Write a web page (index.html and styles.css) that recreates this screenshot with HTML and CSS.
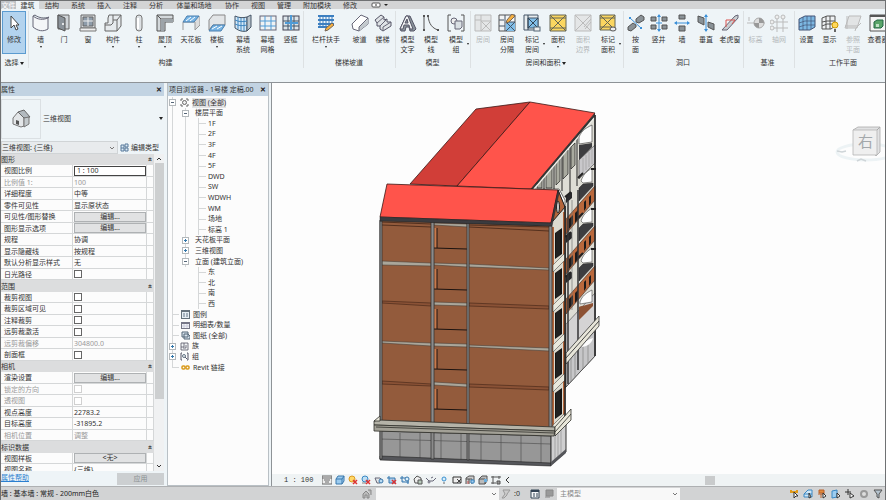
FILE: index.html
```html
<!DOCTYPE html>
<html lang="zh-CN">
<head>
    <meta charset="UTF-8">
    <meta name="viewport" content="width=device-width, initial-scale=1.0">
    <title>Revit - 1号楼 定稿</title>
    <link rel="stylesheet" href="styles.css">
</head>
<body>
    <nav class="tabs">
        <button class="tab file">文件</button>
        <button class="tab active">建筑</button>
        <button class="tab">结构</button>
        <button class="tab">系统</button>
        <button class="tab">插入</button>
        <button class="tab">注释</button>
        <button class="tab">分析</button>
        <button class="tab long">体量和场地</button>
        <button class="tab">协作</button>
        <button class="tab">视图</button>
        <button class="tab">管理</button>
        <button class="tab addins">附加模块</button>
        <button class="tab">修改</button>
        <button class="tab more" aria-label="面板显示">
            <svg width="18" height="6" viewBox="0 0 18 6"><rect x="1" y="1" width="8" height="4" rx="1" fill="#fff" stroke="#555"/><path d="M4 3h2" stroke="#333"/><path d="M13 2h4l-2 2z" fill="#222"/></svg>
        </button>
    </nav>

    <header class="ribbon">
        <section class="group select-group">
            <div class="tools">
                <button class="tool medium selected"><svg viewBox="0 0 18 18"><path d="M6 2v12l3-3 2 5 2-1-2-4h3z" fill="#fff" stroke="#444"/></svg>修改</button>
            </div>
            <div class="group-name">选择 <i class="caret"></i></div>
        </section>

        <section class="group">
            <div class="tools">
                <button class="tool drop"><svg viewBox="0 0 18 18"><path d="M1 2c5 4 10 4 15 2v11c-5 3-10 2-15-2z" fill="#f4f6f8" stroke="#667"/><path d="M1 2l2-1c4 3 9 4 14 2l-1 1" fill="#bcc" stroke="#667"/></svg>墙</button>
                <button class="tool medium"><svg viewBox="0 0 18 18"><path d="M3 1h11v14H3z" fill="#cfd4d8" stroke="#666"/><path d="M3 1l7 3v13l-7-3z" fill="#8b939a" stroke="#555"/><circle cx="8" cy="10" r="1" fill="#fff"/></svg>门</button>
                <button class="tool medium"><svg viewBox="0 0 18 18"><path d="M2 1h14v13H2z" fill="#d7dbde" stroke="#666"/><path d="M4 3h10v9H4z" fill="#8e9caa" stroke="#666"/><path d="M9 3v9M4 7h10" stroke="#eee"/><path d="M1 14h16v3H1z" fill="#eee" stroke="#777"/></svg>窗</button>
                <button class="tool wide drop"><svg viewBox="0 0 18 18"><path d="M5 1h12v11l-4 5H1V9h3V4z" fill="#e6eaed" stroke="#666"/><path d="M9 1v8l-2 2H1M13 17V6l4-5M9 6h4" fill="none" stroke="#666"/></svg>构件</button>
                <button class="tool wide drop"><svg viewBox="0 0 18 18"><rect x="6" y="1" width="6" height="16" rx="3" fill="#dde1e4" stroke="#777"/><path d="M8 4v11" stroke="#fff" stroke-width="2"/></svg>柱</button>
                <button class="tool wide drop"><svg viewBox="0 0 18 18"><path d="M1 1h16v7H9v9H1z" fill="#d3d8db" stroke="#555"/><path d="M1 1l4 4v12M5 5h12" fill="none" stroke="#555"/><path d="M5 5l3 3v9H5zM5 5h12v3H8z" fill="#9da4a9"/></svg>屋顶</button>
                <button class="tool wide"><svg viewBox="0 0 18 18"><path d="M18 2v9l-5 5V8H1" fill="#ddd" stroke="#999"/><path d="M1 8v8" stroke="#999"/><path d="M5 2h12l-5 6H1z" fill="#77b4e4" stroke="#4a7fae"/><path d="M4 7l5-4M8 7l5-4" stroke="#fff"/></svg>天花板</button>
                <button class="tool wide drop"><svg viewBox="0 0 18 18"><path d="M5 1h12v10H5l-4 5V6z" fill="#e2e5e7" stroke="#888"/><path d="M5 11h12l-4 6H1z" fill="#77b4e4" stroke="#4a7fae"/><path d="M4 15l5-3M9 15l5-3" stroke="#fff"/></svg>楼板</button>
                <button class="tool wide"><svg viewBox="0 0 18 18"><path d="M1 2c4 2 8 2 12 1v14c-4 1-8 0-12-3z" fill="#d6e9f7" stroke="#456"/><path d="M13 3l4-2v12l-4 4z" fill="#b9c4cc" stroke="#456"/><path d="M4 3v12M7 4v13M10 4v13M1 6c4 2 8 2 12 1M1 10c4 2 8 2 12 1" fill="none" stroke="#3f86c0"/></svg>幕墙<br>系统</button>
                <button class="tool"><svg viewBox="0 0 18 18"><rect x="1" y="2" width="16" height="14" fill="#eef2f4" stroke="#667"/><path d="M6 2v14M12 2v14M1 7h16M1 12h16" stroke="#4f9bd6"/></svg>幕墙<br>网格</button>
                <button class="tool"><svg viewBox="0 0 18 18"><rect x="1" y="2" width="16" height="14" fill="#dce4e9" stroke="#445"/><path d="M6 2v14M12 2v14M1 7h16M1 12h16" stroke="#456"/><path d="M9 1v15M3 9h13" stroke="#4f9bd6" stroke-width="2"/></svg>竖梃</button>
            </div>
            <div class="group-name">构建</div>
        </section>

        <section class="group">
            <div class="tools">
                <button class="tool xwide drop"><svg viewBox="0 0 18 18"><path d="M1 2h16M1 6h16M1 10h16M1 13h12" stroke="#3c7fc0" stroke-width="2"/><path d="M3 2v12M6 2v12M9 2v12M12 2v10M15 2v8" stroke="#3c7fc0"/><path d="M8 17l1-3 6-5 2 2-6 5z" fill="#f5b041" stroke="#765"/></svg>栏杆扶手</button>
                <button class="tool"><svg viewBox="0 0 18 18"><path d="M1 10L10 1l7 3v6l-9 7-6-2z" fill="#fff" stroke="#667"/><path d="M8 13l9-8v5l-9 7z" fill="#c3c9cd"/><path d="M8 17v-4l9-9" fill="none" stroke="#667"/></svg>坡道</button>
                <button class="tool"><svg viewBox="0 0 18 18"><path d="M1 6l6-5 3 2v3l3-1v3h4v4l-8 5-3-2v-3H3V9z" fill="#dfe3e6" stroke="#556"/><path d="M3 9l7-6M6 12l7-7M9 16v-3l8-5" stroke="#667" fill="none"/></svg>楼梯</button>
            </div>
            <div class="group-name">楼梯坡道</div>
        </section>

        <section class="group">
            <div class="tools">
                <button class="tool"><svg viewBox="0 0 18 18"><path d="M7 2h4l6 13-2 2h-4l-1-4H7l-1 4H2l-1-2z" fill="#8a949b" stroke="#556"/><path d="M1 15L7 2h2l5 13h-3l-1-4H5l-1 4zM6 9h3L8 5z" fill="#f2f4f5" stroke="#556"/></svg>模型<br>文字</button>
                <button class="tool medium"><svg viewBox="0 0 18 18"><path d="M2 2v14M6 2c1 8 4 12 10 14" fill="none" stroke="#555"/><path d="M1 1h2v2H1zM1 15h2v2H1zM5 1h2v2H5zM15 15h2v2h-2z" fill="#555"/></svg>模型<br>线</button>
                <button class="tool wide side"><svg viewBox="0 0 18 18"><path d="M4 1H1v16h3M14 1h3v16h-3" fill="none" stroke="#555"/><circle cx="7" cy="7" r="3" fill="#eee" stroke="#667"/><path d="M8 7h7v6l-2 2H8z" fill="#d9dfe3" stroke="#667"/></svg>模型<br>组</button>
            </div>
            <div class="group-name">模型</div>
        </section>

        <section class="group rooms">
            <div class="tools">
                <button class="tool medium" disabled><svg viewBox="0 0 18 18"><path d="M1 1h16v16H1zM7 1v16M1 6h6M7 7h10M7 7l10 10M17 7L7 17" fill="#e4e6e7" stroke="#bbb"/></svg>房间</button>
                <button class="tool medium"><svg viewBox="0 0 18 18"><path d="M1 1h16v16H1z" fill="#f2f4f5" stroke="#555"/><path d="M8 8h9v9H8z" fill="#82bfe9"/><path d="M7 1v16M1 6h5M1 12h6M8 8h9M8 8l9 9M17 8l-9 9" stroke="#456" fill="none"/><path d="M8 9l1-3 5-6 3 2-6 6z" fill="#f5b041" stroke="#765"/></svg>房间<br>分隔</button>
                <button class="tool wide side"><svg viewBox="0 0 18 18"><path d="M1 1h14v15H1z" fill="#e8ecee" stroke="#456"/><path d="M5 4h10v10H5z" fill="#82bfe9" stroke="#456"/><path d="M5 4l10 10M15 4L5 14M5 1v15" stroke="#345"/><rect x="11" y="13" width="6" height="4" fill="#eee" stroke="#567"/></svg>标记<br>房间</button>
                <button class="tool wide drop"><svg viewBox="0 0 18 18"><path d="M1 1h16v16H1z" fill="#fbd660" stroke="#665"/><path d="M1 1l16 16M17 1L1 17M1 4h16M1 14h16" stroke="#665"/></svg>面积</button>
                <button class="tool medium" disabled><svg viewBox="0 0 18 18"><path d="M1 1h16v16H1z" fill="#e4e6e7" stroke="#bbb"/><path d="M1 1l16 16M17 1L1 17M17 5l-7 8M17 8l-6 7" stroke="#bbb" fill="none"/></svg>面积<br>边界</button>
                <button class="tool wide side"><svg viewBox="0 0 18 18"><path d="M1 1h15v15H1z" fill="#fbd660" stroke="#665"/><path d="M1 1l15 15M16 1L1 16M1 4h15M1 13h12" stroke="#665"/><ellipse cx="14" cy="15" rx="3" ry="2" fill="#eee" stroke="#555"/></svg>标记<br>面积</button>
            </div>
            <div class="group-name">房间和面积 <i class="caret"></i></div>
        </section>

        <section class="group">
            <div class="tools">
                <button class="tool"><svg viewBox="0 0 18 18"><path d="M9 5l5-4 3 2v3l-5 3-3-1zM1 13l5-4 3 2v2l-5 4-3-1z" fill="#8a9297" stroke="#555"/><path d="M3 4l11 10" stroke="#3b90d8"/><path d="M2 3h2v2H2zM13 13h2v2h-2z" fill="#3b90d8"/></svg>按<br>面</button>
                <button class="tool"><svg viewBox="0 0 18 18"><path d="M1 3h5v4H1zM12 3h5v4h-5zM1 11h5v4H1zM12 11h5v4h-5z" fill="#8a9297" stroke="#555"/><path d="M9 1v16M6 9h6" stroke="#3b90d8"/><path d="M9 0l2 3H7zM9 18l2-3H7z" fill="#3b90d8"/></svg>竖井</button>
                <button class="tool medium"><svg viewBox="0 0 18 18"><path d="M6 1h6v4H6zM6 12h6v5H6z" fill="#8a9297" stroke="#555"/><path d="M2 9h14" stroke="#3b90d8"/><path d="M1 9l3-2v4zM17 9l-3-2v4z" fill="#3b90d8"/></svg>墙</button>
                <button class="tool medium"><svg viewBox="0 0 18 18"><path d="M1 2l6 2v7L1 8zM11 8l6 2v6l-6-3z" fill="#8a9297" stroke="#555"/><path d="M9 1v16" stroke="#3b90d8"/><path d="M9 0l2 3H7zM9 18l2-3H7z" fill="#3b90d8"/></svg>垂直</button>
                <button class="tool medium"><svg viewBox="0 0 18 18"><path d="M1 16L14 2l3-1v3L6 16z" fill="#c9ced1" stroke="#667"/><path d="M5 13V6h9l-3 4" fill="none" stroke="#d9534f"/></svg>老虎窗</button>
            </div>
            <div class="group-name">洞口</div>
        </section>

        <section class="group datum">
            <div class="tools">
                <button class="tool" disabled><svg viewBox="0 0 18 18"><path d="M0 9h18" stroke="#bbb"/><circle cx="12" cy="9" r="5" fill="#ddd" stroke="#aaa"/><path d="M12 4a5 5 0 0 1 5 5h-5zM12 14a5 5 0 0 1-5-5h5z" fill="#999"/><path d="M2 3v4" stroke="#bbb"/></svg>标高</button>
                <button class="tool medium" disabled><svg viewBox="0 0 18 18"><path d="M7 5v13M13 5v13M4 8h14M4 14h14" stroke="#bbb"/><g fill="#eee" stroke="#bbb"><circle cx="7" cy="3" r="2"/><circle cx="13" cy="3" r="2"/><circle cx="2" cy="8" r="2"/><circle cx="2" cy="14" r="2"/></g></svg>轴网</button>
            </div>
            <div class="group-name">基准</div>
        </section>

        <section class="group">
            <div class="tools">
                <button class="tool"><svg viewBox="0 0 18 18"><path d="M1 5l6-3h10v11l-5 3H1z" fill="#7cb7e2" stroke="#457"/><path d="M1 9l6-2h10M1 13l6-2h10M5 3v13M9 2v14M13 2v13" fill="none" stroke="#457" stroke-width=".7"/></svg>设置</button>
                <button class="tool"><svg viewBox="0 0 18 18"><path d="M1 4l5-2h8v10l-4 3H1z" fill="#eef1f3" stroke="#555"/><path d="M1 8l5-1h8M1 12l5-2h8M5 2v13M9 2v13" fill="none" stroke="#555"/><circle cx="14" cy="11" r="3" fill="#ffd85c" stroke="#c90"/><path d="M13 15h2v3h-2z" fill="#666"/></svg>显示</button>
                <button class="tool medium" disabled><svg viewBox="0 0 18 18"><path d="M5 2h12l-4 12H1z" fill="#e2e4e5" stroke="#bbb"/><path d="M3 2v13M1 12h13M11 17l1-3 5-5" stroke="#bbb" fill="none"/></svg>参照<br>平面</button>
                <button class="tool wide"><svg viewBox="0 0 18 18"><path d="M1 1h16v16H1z" fill="#f5f5f5" stroke="#555"/><path d="M1 2h16" stroke="#555" stroke-width="2"/><path d="M5 8l3-2h6v6l-2 2H5z" fill="#5aa469" stroke="#264"/><path d="M7 10h3v3H7z" fill="#bfe0c5"/></svg>查看器</button>
            </div>
            <div class="group-name">工作平面</div>
        </section>
    </header>

    <main class="workspace">
        <aside class="properties">
            <div class="panel-title">属性<button class="close" aria-label="关闭属性">✕</button></div>
            <div class="type-selector">
                <div class="type-thumb">
                    <svg width="20" height="20" viewBox="0 0 20 20"><path d="M2 9l5-6 6 5v9l-3 1-8-3z" fill="#e3e6e8" stroke="#777"/><path d="M7 3l6-2 6 7-6 1z" fill="#b3babf" stroke="#666"/><path d="M13 9l5-1v7l-5 3z" fill="#c3c9cc" stroke="#777"/><path d="M5 11l3 1v4l-3-1z" fill="#555"/></svg>
                </div>
                <span>三维视图</span>
                <i class="caret"></i>
            </div>
            <div class="instance-row">
                <select aria-label="实例"><option>三维视图: {三维}</option></select>
                <button class="edit-type"><svg width="9" height="9" viewBox="0 0 9 9"><path d="M1 2h3v6H1zM5 1h3v3H5zM5 5h3v3H5zM1 5h3" fill="#dceaf5" stroke="#57799a"/></svg>编辑类型</button>
            </div>
            <div class="prop-body">
                <div class="prop-clip">
                    <table class="props">
                        <colgroup>
                            <col class="col-name">
                            <col class="col-value">
                            <col>
                        </colgroup>
                        <tbody>
                            <tr><th colspan="3">图形<b>«</b></th></tr>
                            <tr><td><label for="scale">视图比例</label></td><td><input type="text" id="scale" value="1 : 100"></td><td></td></tr>
                            <tr class="off"><td>比例值 1:</td><td>100</td><td></td></tr>
                            <tr><td>详细程度</td><td>中等</td><td></td></tr>
                            <tr><td>零件可见性</td><td>显示原状态</td><td></td></tr>
                            <tr><td>可见性/图形替换</td><td><button>编辑...</button></td><td></td></tr>
                            <tr><td>图形显示选项</td><td><button>编辑...</button></td><td></td></tr>
                            <tr><td>规程</td><td>协调</td><td></td></tr>
                            <tr><td>显示隐藏线</td><td>按规程</td><td></td></tr>
                            <tr><td>默认分析显示样式</td><td>无</td><td></td></tr>
                            <tr><td><label for="sun">日光路径</label></td><td><input type="checkbox" id="sun"></td><td></td></tr>
                            <tr><th colspan="3">范围<b>«</b></th></tr>
                            <tr><td><label for="crop">裁剪视图</label></td><td><input type="checkbox" id="crop"></td><td></td></tr>
                            <tr><td><label for="cropVisible">裁剪区域可见</label></td><td><input type="checkbox" id="cropVisible"></td><td></td></tr>
                            <tr><td><label for="annoCrop">注释裁剪</label></td><td><input type="checkbox" id="annoCrop"></td><td></td></tr>
                            <tr><td><label for="farClip">远剪裁激活</label></td><td><input type="checkbox" id="farClip"></td><td></td></tr>
                            <tr class="off"><td>远剪裁偏移</td><td>304800.0</td><td></td></tr>
                            <tr><td><label for="sectionBox">剖面框</label></td><td><input type="checkbox" id="sectionBox"></td><td></td></tr>
                            <tr><th colspan="3">相机<b>«</b></th></tr>
                            <tr><td>渲染设置</td><td><button>编辑...</button></td><td></td></tr>
                            <tr class="off"><td><label for="locked">锁定的方向</label></td><td><input type="checkbox" id="locked" disabled></td><td></td></tr>
                            <tr class="off"><td><label for="persp">透视图</label></td><td><input type="checkbox" id="persp" disabled></td><td></td></tr>
                            <tr><td>视点高度</td><td>22783.2</td><td></td></tr>
                            <tr><td>目标高度</td><td>-31895.2</td><td></td></tr>
                            <tr class="off"><td>相机位置</td><td>调整</td><td></td></tr>
                            <tr><th colspan="3">标识数据<b>«</b></th></tr>
                            <tr><td>视图样板</td><td><button>&lt;无&gt;</button></td><td></td></tr>
                            <tr><td>视图名称</td><td>{三维}</td><td></td></tr>
                        </tbody>
                    </table>
                </div>
                <div class="scrollbar">
                    <svg width="8" height="8" viewBox="0 0 8 8"><path d="M2 5l2-2 2 2" fill="none" stroke="#333"/></svg>
                    <div class="thumb"></div>
                    <svg width="8" height="8" viewBox="0 0 8 8"><path d="M2 3l2 2 2-2" fill="none" stroke="#333"/></svg>
                </div>
            </div>
            <div class="prop-footer">
                <a href="#help">属性帮助</a>
                <button disabled>应用</button>
            </div>
        </aside>

        <aside class="browser">
            <div class="panel-title">项目浏览器 - 1号楼 定稿.00<button class="close" aria-label="关闭项目浏览器">✕</button></div>
            <ul class="tree">
                <li class="top"><i class="box"></i><svg class="ti" viewBox="0 0 9 9"><path d="M1 3V1h2M6 1h2v2M8 6v2H6M3 8H1V6" fill="none" stroke="#666"/><circle cx="4.500" cy="4.500" r="2" fill="#eee" stroke="#666"/></svg><span class="picked">视图 (全部)</span></li>
                <li class="mid"><i class="box"></i>楼层平面</li>
                <li class="leaf">1F</li>
                <li class="leaf">2F</li>
                <li class="leaf">3F</li>
                <li class="leaf">4F</li>
                <li class="leaf">5F</li>
                <li class="leaf">DWD</li>
                <li class="leaf">SW</li>
                <li class="leaf">WDWH</li>
                <li class="leaf">WM</li>
                <li class="leaf">场地</li>
                <li class="leaf">标高 1</li>
                <li class="mid"><i class="box plus"></i>天花板平面</li>
                <li class="mid"><i class="box plus"></i>三维视图</li>
                <li class="mid"><i class="box"></i>立面 (建筑立面)</li>
                <li class="leaf last">东</li>
                <li class="leaf last">北</li>
                <li class="leaf last">南</li>
                <li class="leaf last">西</li>
                <li class="top"><i class="dash"></i><svg class="ti" viewBox="0 0 9 9"><path d="M0 0h9v9H0z" fill="#66727c"/><path d="M1 2h7v6H1z" fill="#e6eef4"/><path d="M2 4h2M5 4h2M2 6h2M5 6h2" stroke="#678"/></svg>图例</li>
                <li class="top"><i class="dash"></i><svg class="ti" viewBox="0 0 9 9"><path d="M0 1h9v7H0z" fill="#778"/><path d="M1 3h7v4H1z" fill="#f4f6f8"/><path d="M1 5h7M3 3v4M6 3v4" stroke="#ccd"/></svg>明细表/数量</li>
                <li class="top"><i class="dash"></i><svg class="ti" viewBox="0 0 9 9"><path d="M1 1h6v5H1zM3 3h4l2 2v3H3z" fill="#d8e4ee" stroke="#567"/></svg>图纸 (全部)</li>
                <li class="top"><i class="box plus"></i><svg class="ti" viewBox="0 0 9 9"><path d="M1 1h7v7H1zM4 1v4H1M6 3v3H3" fill="#f2f4f5" stroke="#556" stroke-width=".8"/></svg>族</li>
                <li class="top"><i class="box plus"></i><svg class="ti" viewBox="0 0 9 9"><path d="M2 1H1v7h1M7 1h1v7H7M5 5l2 2" fill="none" stroke="#556"/><circle cx="4" cy="4" r="1.500" fill="#eee" stroke="#678"/></svg>组</li>
                <li class="top end"><i class="dash"></i><svg class="ti" viewBox="0 0 9 9"><g fill="none" stroke="#d99a1c" stroke-width="1.500"><rect x="1" y="3" width="3" height="3" rx="1"/><rect x="5" y="3" width="3" height="3" rx="1"/></g></svg>Revit 链接</li>
            </ul>
        </aside>

        <section class="view">
            <svg class="scene" viewBox="272 83 613 391" role="img" aria-label="三维视图">
                <defs>
                    <!-- one storey of the long side: parapet, slab, opening and posts -->
                    <g id="storey">
                        <path d="M566 219l29-33v14l-29 34z" fill="#b9683c" stroke="#3a2a22" stroke-width=".6"/>
                        <path d="M569 219l4-4v9l-4 5zM575 213l3-3v9l-3 4zM584 202l2-2v8l-2 3zM589 197l2-2v8l-2 3z" fill="#1d1a1a"/>
                        <path d="M579 188l4-4 10-1v3l-14 15z" fill="#3d3d40" stroke="#222" stroke-width=".5"/>
                        <path d="M581 181c2-6 5-9 11-13v14l-9 1z" fill="#fdfdfd" stroke="#444" stroke-width=".6"/>
                        <path d="M566 196l6-4v6l-6 5z" fill="#28282a"/>
                        <path d="M578 178l5-5M565 197l6-5M591 169h5" stroke="#222" stroke-width="2"/>
                    </g>
                    <!-- stair bay between the two front posts -->
                    <g id="stair">
                        <path d="M434 228h3v20h-3z" fill="#c97a4c"/>
                        <path d="M437 228v20M434 248l33 1" stroke="#1c1310" fill="none"/>
                    </g>
                    <g id="window">
                        <path d="M555 233l7-5v26l-7 5z" fill="#151515"/>
                        <path d="M553 265l12-12v7l-12 12z" fill="#e9e8dc" stroke="#333" stroke-width=".5"/>
                        <path d="M557 232v25M559 231v25" stroke="#555" stroke-width=".4"/>
                    </g>
                </defs>

                <!-- long side -->
                <path d="M531 189l64-74v241l-30 32V200l-6-11z" fill="#deddd5" stroke="#333" stroke-width=".7"/>
                <path d="M537 184l5-5v9h-5zM546 174l6-6v20h-6zM556 163l4-4v22l-4 4zM563 155l5-5v24l-5 5zM571 147l4-4v22l-4 4z" fill="#a9aa9f" stroke="#222" stroke-width=".7"/>
                <path d="M544 174v15M554 162v27M562 153v38M570 144v50M577 136v50" stroke="#222"/>
                <path d="M534 189l60-71" stroke="#f0f0e9" stroke-width="1.500"/>
                <path d="M579 137c3-7 7-9 13-12v17l-13 2z" fill="#fdfdfd" stroke="#333" stroke-width=".6"/>
                <path d="M579 145l13-2v4l-13 14z" fill="#3d3d40"/>
                <path d="M579 160l16-15v18l-16 16z" fill="#c9c8cb" stroke="#444" stroke-width=".6"/>
                <path d="M583 158v15M586 155v15M589 152v15M592 149v15" stroke="#999" stroke-width=".6"/>
                <use href="#storey"/>
                <use href="#storey" y="40"/>
                <use href="#storey" y="80"/>
                <path d="M579 307l14-4v5l-14 14z" fill="#8c5133"/>
                <path d="M566 324l29-31v33l-29 35z" fill="#d4d3d4" stroke="#444" stroke-width=".6"/>
                <path d="M580 302c2-6 6-9 12-12v12l-12 2z" fill="#fdfdfd" stroke="#444" stroke-width=".6"/>
                <path d="M579 307l14-4v3l-14 14z" fill="#8c5133"/>
                <path d="M566 362l29-32v26l-29 31z" fill="#c6c6c8" stroke="#333" stroke-width=".7"/>
                <path d="M571 357v25M575 353v24M583 345v24M588 340v23" stroke="#777" stroke-width=".6"/>
                <path d="M568 200v184M578 190v180" stroke="#333335" stroke-width="1.500"/>
                <path d="M572 200v110" stroke="#777" stroke-width=".7"/>
                <path d="M595 115v241" stroke="#232325" stroke-width="1.500"/>
                <path d="M581 347c3-5 7-8 12-9-1 5-6 9-12 9z" fill="#fdfdfd"/>
                <path d="M566 353l33-37v10l-33 38z" fill="#e7e5d9" stroke="#333" stroke-width=".8"/>
                <path d="M566 358l33-37" stroke="#444"/>

                <!-- gable end -->
                <path d="M558 190l7 18v220l-14 14V222z" fill="#dddbd0" stroke="#222" stroke-width=".8"/>
                <path d="M558 190l7 17-12 14-2 1z" fill="#b4653a" stroke="#222"/>
                <ellipse cx="558" cy="207" rx="1.500" ry="6" fill="#ccc" stroke="#222"/>
                <path d="M563 212h2v206l-2 2zM552 227h2v199h-2z" fill="#b4653a"/>
                <use href="#window"/>
                <use href="#window" y="40"/>
                <use href="#window" y="80"/>
                <use href="#window" y="120"/>
                <use href="#window" y="160"/>
                <path d="M565 206v214" stroke="#222" stroke-width="1.500"/>

                <!-- front wall -->
                <path d="M380 220l171 6v203l-171-8z" fill="#935b3c" stroke="#333"/>
                <path d="M382 225l49 2M469 227l80 4M382 222l49 2M469 225l80 2" stroke="#54301e"/>
                <g stroke="#54301e" stroke-width=".8" fill="#8a5236">
                    <path d="M382 301l49 2v3l-49-3zM469 303l80 3v3l-80-3zM382 381l49 3v2l-49-2zM469 384l80 3v3l-80-3z"/>
                </g>
                <g fill="#aaa69a" stroke="#4b4038" stroke-width=".6">
                    <path d="M382 261l49 2v3l-49-1zM434 263l33 1v3l-33-2zM469 264l80 4v2l-80-3z"/>
                    <path d="M382 341l49 2v3l-49-3zM434 343l33 1v3l-33-1zM469 345l80 3v3l-80-4z"/>
                    <path d="M434 223l33 1v3l-33-2zM434 302l33 1v3l-33-1zM434 382l33 2v3l-33-2z"/>
                </g>
                <use href="#stair"/>
                <use href="#stair" y="41"/>
                <use href="#stair" y="81"/>
                <use href="#stair" y="121"/>
                <use href="#stair" y="161"/>

                <!-- base -->
                <path d="M380 431l171 5v29l-171-6z" fill="#979797" stroke="#444"/>
                <path d="M380 439l171 5M400 433v26M420 433v27M441 433v27M461 434v27M481 434v28M501 434v29M521 435v28M541 436v28" stroke="#555" stroke-width=".7"/>
                <path d="M380 456l171 7v3l-171-6z" fill="#55565a" stroke="#222" stroke-width=".6"/>
                <path d="M551 436l15-16v32l-15 13z" fill="#cfcfd0" stroke="#333"/>
                <path d="M555 433v28M558 430v29M561 427v28" stroke="#888" stroke-width=".6"/>
                <path d="M551 462l15-13v4l-15 13z" fill="#55565a"/>
                <g fill="#8b8b8b" stroke="#2b2b2b" stroke-width=".7">
                    <path d="M380 221h2v238h-2zM431 222h3v237h-3zM467 223h2v237h-2zM549 226h3v205h-3z"/>
                </g>
                <g fill="#b5b3a8" stroke="#2e2e2a" stroke-width=".8">
                    <path d="M374 421l5-1 176 7v4l-181-6z"/>
                    <path d="M374 425l181 6-1 5-180-5z" fill="#a3a197"/>
                    <path d="M555 427l16-18v11l-16 16z" fill="#e9e7da"/>
                    <path d="M374 421l6-5v5z" fill="#e9e7da"/>
                    <path d="M376 427l178 6M555 432l16-18" fill="none"/>
                </g>

                <!-- roofs -->
                <path d="M476 109l54-7-73 84-47-2z" fill="#d13e38" stroke="#3b1815" stroke-width=".8"/>
                <path d="M530 102l65 11-64 76-74-3z" fill="#ff544b" stroke="#3b1815" stroke-width=".8"/>
                <path d="M595 113v3l-62 73h-2z" fill="#333"/>
                <path d="M387 184l171 6-7 33-171-6z" fill="#ff544b" stroke="#3b1815" stroke-width=".8"/>
                <path d="M380 217l171 6 7-33 1 3-7 33-172-5z" fill="#3b3b3f" stroke="#222" stroke-width=".5"/>

                <!-- view cube -->
                <ellipse cx="866" cy="152" rx="29" ry="8" fill="none" stroke="#edf3f5" stroke-width="3"/>
                <path d="M837 151l5 1 4-1M857 161l4-2 5 2" fill="none" stroke="#cfd5d8" stroke-width="1.500"/>
                <path d="M853 130l5-3h22v25l-4 4z" fill="#e1e2e3" stroke="#aaa" stroke-width=".8"/>
                <path d="M853 130h24v25h-24z" fill="#efefef" stroke="#b4b4b4" stroke-width=".8"/>
                <path d="M877 130l3-3" stroke="#aaa"/>
                <text x="858" y="147" class="cube-face">右</text>
            </svg>

            <div class="view-bar">
                <span class="scale">1 : 100</span>
                <div class="view-icons">
                    <button aria-label="详细程度"><svg viewBox="0 0 10 10"><path d="M0 1h10v8H0zM0 3h10M2 5h6M3 7h4" fill="#eee" stroke="#666"/></svg></button>
                    <button aria-label="视觉样式"><svg viewBox="0 0 10 10"><path d="M1 4l2-3h6v5L7 9H1zM1 4h6v5M7 4l2-3" fill="#9cccf0" stroke="#3a78ad"/></svg></button>
                    <button aria-label="日光路径"><svg viewBox="0 0 10 10"><circle cx="4" cy="4" r="3" fill="#ffd968" stroke="#dd9a20"/><path d="M5 5l4 4M9 5L5 9" stroke="#d33" stroke-width="1.500"/></svg></button>
                    <button aria-label="阴影"><svg viewBox="0 0 10 10"><circle cx="4" cy="4" r="3" fill="#bfe0f5" stroke="#3a88c4"/><path d="M1 8h4" stroke="#888"/><path d="M5 5l4 4M9 5L5 9" stroke="#d33" stroke-width="1.500"/></svg></button>
                    <button aria-label="渲染"><svg viewBox="0 0 10 10"><path d="M1 3h5l2 2-2 3H3z" fill="#e4e8ea" stroke="#667"/><circle cx="7" cy="6" r="2" fill="#b9dbf2" stroke="#3a78ad"/></svg></button>
                    <button aria-label="裁剪视图"><svg viewBox="0 0 10 10"><path d="M0 3h8v5H2V1" fill="#a6cdec" stroke="#3a78ad"/><path d="M5 5l4 4M9 5L5 9" stroke="#d33" stroke-width="1.500"/></svg></button>
                    <button aria-label="显示裁剪区域"><svg viewBox="0 0 10 10"><path d="M0 3h8v6M2 1v6h7" fill="#a6cdec" stroke="#3a78ad"/><circle cx="7" cy="4" r="2" fill="#d8eefb" stroke="#3a78ad"/></svg></button>
                    <button aria-label="锁定视图"><svg viewBox="0 0 10 10"><path d="M1 4l3-3 4 2v5H2z" fill="#eee" stroke="#555"/><path d="M5 5h4v4H5z" fill="#b7c9bb" stroke="#555"/></svg></button>
                    <button aria-label="临时隐藏"><svg viewBox="0 0 10 10"><path d="M0 3l3 3h4l3-3M5 3l2-1" fill="none" stroke="#667"/><circle cx="3" cy="7" r="1" fill="#fff" stroke="#667"/></svg></button>
                    <button aria-label="显示隐藏图元"><svg viewBox="0 0 10 10"><circle cx="5" cy="4" r="2" fill="#d8eefb" stroke="#3a90d0"/><path d="M4 8h2" stroke="#666"/></svg></button>
                    <button aria-label="视图属性"><svg viewBox="0 0 10 10"><path d="M1 2h8v6H1z" fill="#eee" stroke="#333"/><path d="M5 4l4 4M9 4L5 8" stroke="#444"/></svg></button>
                    <button aria-label="分析模型"><svg viewBox="0 0 10 10"><path d="M1 9V3l3-2h5v6M1 4h6v5M4 4v5" fill="#ccc" stroke="#555"/><path d="M6 5h3v3H6z" stroke="#3a88c4" fill="#a6cdec"/><path d="M3 6v3" stroke="#c55"/></svg></button>
                    <button aria-label="位移集"><svg viewBox="0 0 10 10"><path d="M1 4l3-3h5v5L7 9H1zM1 4h6v5" fill="#bbb" stroke="#555"/><path d="M6 4h3v3H6z" fill="#69aede"/></svg></button>
                    <button aria-label="约束"><svg viewBox="0 0 10 10"><path d="M0 2h10M2 1v8M0 8h5M8 1v3" stroke="#555"/><path d="M6 6h3v3H6z" fill="#999" stroke="#555"/></svg></button>
                    <button aria-label="收起"><svg viewBox="0 0 10 10"><path d="M5 2L2 5l3 3" fill="none" stroke="#333"/></svg></button>
                </div>
                <div class="hscroll"><div class="hthumb"></div></div>
            </div>
        </section>
    </main>

    <footer class="status">
        <span class="hint">墙 : 基本墙 : 常规 - 200mm白色</span>
        <svg class="si" viewBox="0 0 10 10"><path d="M1 5l3-3 3 3v4H5V6H3v3H1zM6 1h3v5" fill="#bbb" stroke="#888"/></svg>
        <select class="workset" aria-label="工作集"><option></option></select>
        <svg class="si" viewBox="0 0 10 10"><path d="M2 1h7L6 5v1L3 9H1l3-4z" fill="#ccc" stroke="#999"/></svg>
        <span class="count">:0</span>
        <svg class="si dark" viewBox="0 0 10 10"><path d="M1 1h8v8H1z" fill="#f4f6f8" stroke="#345"/><path d="M1 2h8" stroke="#345" stroke-width="2"/><path d="M3 5h2M3 7h2M6 5h2M6 7h2" stroke="#345"/></svg>
        <svg class="si" viewBox="0 0 10 10"><path d="M2 1h7v6H2zM1 8h5" fill="#999" stroke="#888"/></svg>
        <select class="option" aria-label="设计选项" disabled><option>主模型</option></select>
        <div class="status-icons">
            <button aria-label="选择链接"><svg viewBox="0 0 10 10"><path d="M1 3h8M2 1v3M8 1v3" stroke="#e09a1a" stroke-width="2"/><path d="M5 3v6l2-2h2z" fill="#fff" stroke="#333"/></svg></button>
            <button aria-label="选择基线图元"><svg viewBox="0 0 10 10"><path d="M1 5l4-4h4v7H1zM1 5h8" fill="#cfe5f5" stroke="#3a88c4"/><path d="M6 4v5l2-1z" fill="#fff" stroke="#333"/></svg></button>
            <button aria-label="选择锁定图元"><svg viewBox="0 0 10 10"><path d="M2 1h5v3H2zM1 5h7M4 5v4" fill="#e08a3c" stroke="#b9602a"/><path d="M6 4v5l3-2z" fill="#fff" stroke="#333"/></svg></button>
            <button aria-label="按面选择"><svg viewBox="0 0 10 10"><path d="M1 2l5-1v7l-5 1z" fill="#9cccf0" stroke="#3a88c4"/><path d="M6 4v5l3-2z" fill="#fff" stroke="#333"/></svg></button>
            <button aria-label="选择时拖曳"><svg viewBox="0 0 10 10"><path d="M3 0v6M0 3h6" stroke="#333"/><path d="M5 4v5l4-2z" fill="#fff" stroke="#333"/></svg></button>
            <button aria-label="后台进程"><svg viewBox="0 0 10 10"><circle cx="5" cy="5" r="3" fill="#ddd" stroke="#999" stroke-width="2"/></svg></button>
            <button aria-label="过滤器"><svg viewBox="0 0 10 10"><path d="M1 1h8L6 5v4L4 8V5z" fill="#b5c3ce" stroke="#555"/></svg></button>
        </div>
    </footer>
</body>
</html>
```
FILE: styles.css
```css
* {
    margin: 0;
    padding: 0;
    box-sizing: border-box;
}

body {
    height: 100vh;
    display: flex;
    flex-direction: column;
    overflow: hidden;
    border: 1px solid #6f7173;
    border-bottom: none;
    background: #eef4f7;
    color: #333;
    font: 7px/10px "Noto Sans", "Noto Sans CJK SC", sans-serif;
}

button, input, select {
    font: inherit;
    color: inherit;
    border: none;
    background: none;
}

svg {
    display: block;
    flex: none;
}

.caret {
    display: inline-block;
    border: 2px solid transparent;
    border-top: 3px solid #222;
    border-bottom: none;
    vertical-align: middle;
}

/* tabs */
.tabs {
    display: flex;
    flex: none;
    height: 8px;
    background: #d3d4d5;
}

.tab {
    width: 26px;
    height: 8px;
    line-height: 7px;
    white-space: nowrap;
}

.tab.file {
    width: 15px;
    color: #fff;
    background: #bfc3c7;
}

.tab.active {
    width: 23px;
    background: #eef4f7;
}

.tab.long {
    width: 50px;
}

.tab.addins {
    width: 40px;
}

.tab.more {
    margin-left: 8px;
}

/* ribbon */
.ribbon {
    display: flex;
    flex: none;
    height: 74px;
    padding-top: 2px;
    overflow: hidden;
    border-bottom: 1px solid #8e9397;
}

.group {
    flex: none;
    height: 57px;
    padding-right: 1px;
    border-right: 1px solid #dde1e3;
}

.group.rooms { padding-right: 2px; }
.group.datum { padding-right: 3px; }

.group.select-group {
    padding: 0 1px;
    width: 28px;
}

.group:last-child {
    border-right: none;
}

.tools {
    display: flex;
    height: 47px;
}

.tool {
    position: relative;
    display: flex;
    flex-direction: column;
    align-items: center;
    width: 23px;
    height: 43px;
    padding-top: 3px;
    white-space: nowrap;
}

.tool svg {
    width: 18px;
    height: 18px;
    margin-bottom: 3px;
}

.tool.medium { width: 24px; }
.tool.wide { width: 26px; }
.tool.xwide { width: 44px; }

.tool.selected {
    background: #b3d3ee;
    border: 1px solid #5b9bd0;
    padding-top: 2px;
}

.tool:disabled {
    color: #b4b8ba;
}

.tool.drop::after, .tool.side::after {
    content: "";
    border: 1px solid transparent;
    border-top: 2px solid #222;
    border-bottom: none;
    margin-top: 1px;
}

.tool.side::after {
    position: absolute;
    right: 0;
    bottom: 9px;
}

.group-name {
    text-align: center;
    white-space: nowrap;
}

/* panels */
.workspace {
    display: flex;
    flex: 1;
    min-height: 0;
}

.panel-title {
    display: flex;
    flex: none;
    justify-content: space-between;
    align-items: center;
    height: 13px;
    background: #c2d3e2;
    white-space: nowrap;
}

.close {
    width: 9px;
    margin-right: 1px;
    font-weight: bold;
    color: #222;
}

.properties {
    display: flex;
    flex-direction: column;
    flex: none;
    width: 163px;
}

.type-selector {
    display: flex;
    flex: none;
    align-items: center;
    height: 45px;
    padding-right: 1px;
}

.type-selector .caret {
    margin-left: auto;
}

.type-thumb {
    display: flex;
    align-items: center;
    justify-content: center;
    width: 40px;
    height: 40px;
    margin-right: 2px;
    border: 1px solid #dbe0e3;
}

.instance-row {
    display: flex;
    flex: none;
    height: 13px;
}

select {
    appearance: none;
    background: url("data:image/svg+xml,%3Csvg xmlns='http://www.w3.org/2000/svg' width='8' height='8'%3E%3Cpath d='M2 3l2 2 2-2' fill='none' stroke='%23777'/%3E%3C/svg%3E") no-repeat right 1px center;
}

.instance-row select {
    width: 117px;
    height: 13px;
    border: 1px solid #d0d4d6;
    background-color: #e8ebed;
}

.edit-type {
    display: flex;
    align-items: center;
    gap: 2px;
    margin-left: 2px;
    white-space: nowrap;
}

.prop-body {
    display: flex;
    flex: 1;
    min-height: 0;
}

.prop-clip {
    flex: 1;
    overflow: hidden;
    background: #fcfcfc;
}

.props {
    width: 100%;
    table-layout: fixed;
    border-collapse: separate;
    border-spacing: 0;
    line-height: 9px;
}

.col-name { width: 72px; }
.col-value { width: 74px; }

.props tr { height: 11px; }
.props tr:nth-child(even) { height: 12px; }

.props th {
    text-align: left;
    font-weight: normal;
    background: #dcddde;
}

.props th b {
    float: right;
    margin-right: 2px;
    transform: rotate(90deg);
}

.props td {
    border-right: 1px solid #d5d7d8;
    border-bottom: 1px solid #d5d7d8;
    padding-left: 1px;
    white-space: nowrap;
}

.props td:first-child { padding-left: 3px; }
.props td:last-child { padding: 0; }

.props td:nth-child(2) input[type="text"],
.props td button {
    display: block;
    width: 100%;
    height: 10px;
    line-height: 8px;
}

.props input[type="text"] {
    border: 1px solid #444;
    padding-left: 2px;
    background: #fff;
}

.props td button {
    background: #e1e2e3;
    border: 1px solid #aeb1b3;
}

.props input[type="checkbox"] {
    display: block;
    appearance: none;
    width: 8px;
    height: 8px;
    border: 1px solid #666;
    background: #fff;
}

.props input:disabled { border-color: #d0d0d0; }
.props .off { color: #999; }

.scrollbar {
    display: flex;
    flex-direction: column;
    align-items: center;
    width: 10px;
    padding: 1px 0;
    background: #f0f1f2;
}

.thumb {
    width: 9px;
    height: 236px;
    margin-bottom: auto;
    background: #cdcfd0;
}

.prop-footer {
    display: flex;
    flex: none;
    justify-content: space-between;
    height: 15px;
    line-height: 13px;
}

.prop-footer a { color: #2a7fd0; }

.prop-footer button {
    width: 47px;
    height: 12px;
    margin-top: 2px;
    line-height: 12px;
    background: #cccfd1;
    color: #8b8f92;
}

/* project browser */
.browser {
    display: flex;
    flex-direction: column;
    flex: none;
    width: 102px;
    margin: 0 2px 0 3px;
    background: #fcfcfc;
    border: 1px solid #b9c0c5;
    border-top: none;
}

.browser .panel-title {
    padding-left: 1px;
}

.tree {
    display: grid;
    grid-auto-rows: 11px 10px 11px 10px 11px;
    padding-top: 1px;
    list-style: none;
}

.tree li {
    --rail: linear-gradient(#d5d7d8, #d5d7d8) no-repeat;
    display: flex;
    align-items: center;
    white-space: nowrap;
    background: var(--rail) 4px 0 / 1px 100%;
}

.tree .top { padding-left: 1px; }
.tree .end { background: var(--rail) 4px 0 / 1px 50%; }
.tree .mid { padding-left: 14px; background: var(--rail) 4px 0 / 1px 100%, var(--rail) 17px 0 / 1px 100%; }
.tree .leaf { padding-left: 30px; background: var(--rail) 4px 0 / 1px 100%, var(--rail) 17px 0 / 1px 100%, var(--rail) 30px 0 / 1px 100%; }
.tree .last { background: var(--rail) 4px 0 / 1px 100%, var(--rail) 30px 0 / 1px 100%; }

.tree .leaf::before, .dash {
    content: "";
    width: 8px;
    height: 1px;
    margin-right: 2px;
    background: #d5d7d8;
}

.tree .dash {
    width: 7px;
    margin: 0 2px 0 3px;
}

.box {
    width: 7px;
    height: 7px;
    margin-right: 4px;
    border: 1px solid #b3b8bb;
    background: linear-gradient(#567, #567) no-repeat center / 3px 1px, #fff;
}

.box.plus {
    background: linear-gradient(#37a, #37a) no-repeat center / 3px 1px, linear-gradient(#37a, #37a) no-repeat center / 1px 3px, #fff;
}

.tree .mid .box { margin-right: 6px; }

.ti {
    width: 9px;
    height: 9px;
    margin-right: 3px;
}

.picked { background: #e3e4e5; }

/* model view */
.view {
    display: flex;
    flex-direction: column;
    flex: 1;
    min-width: 0;
    background: #fdfdfd;
    border-left: 1px solid #8e9397;
}

.scene {
    flex: 1;
    width: 100%;
    min-height: 0;
}

.cube-face {
    font-size: 15px;
    fill: #a3a8ab;
}

.view-bar {
    display: flex;
    flex: none;
    align-items: center;
    height: 12px;
    background: #eff3f4;
}

.scale {
    width: 50px;
    padding-left: 12px;
    font-family: "Liberation Mono", monospace;
    white-space: nowrap;
}

.view-icons, .status-icons {
    display: flex;
    gap: 3px;
}

.view-icons svg, .status-icons svg, .si {
    width: 10px;
    height: 10px;
}

.hscroll {
    display: flex;
    flex: 1;
    justify-content: center;
    padding-left: 20px;
}

.hthumb {
    width: 10px;
    height: 9px;
    background: #c9cbcc;
}

/* status bar */
.status {
    display: flex;
    flex: none;
    align-items: center;
    height: 14px;
    border-top: 1px solid #aeb0b2;
    background: #d2d3d4;
    white-space: nowrap;
}

.hint {
    width: 361px;
    color: #222;
}

.status select {
    width: 123px;
    height: 12px;
    background-color: #f8f8f8;
}

.status .workset { margin: 0 2px 0 4px; }
.status .option { margin-left: 3px; padding-left: 3px; color: #888; opacity: 1; }

.count { margin: 0 10px 0 3px; }
.si.dark { margin-right: 4px; }

.status-icons {
    gap: 4px;
    margin-left: auto;
    margin-right: 2px;
}
```
